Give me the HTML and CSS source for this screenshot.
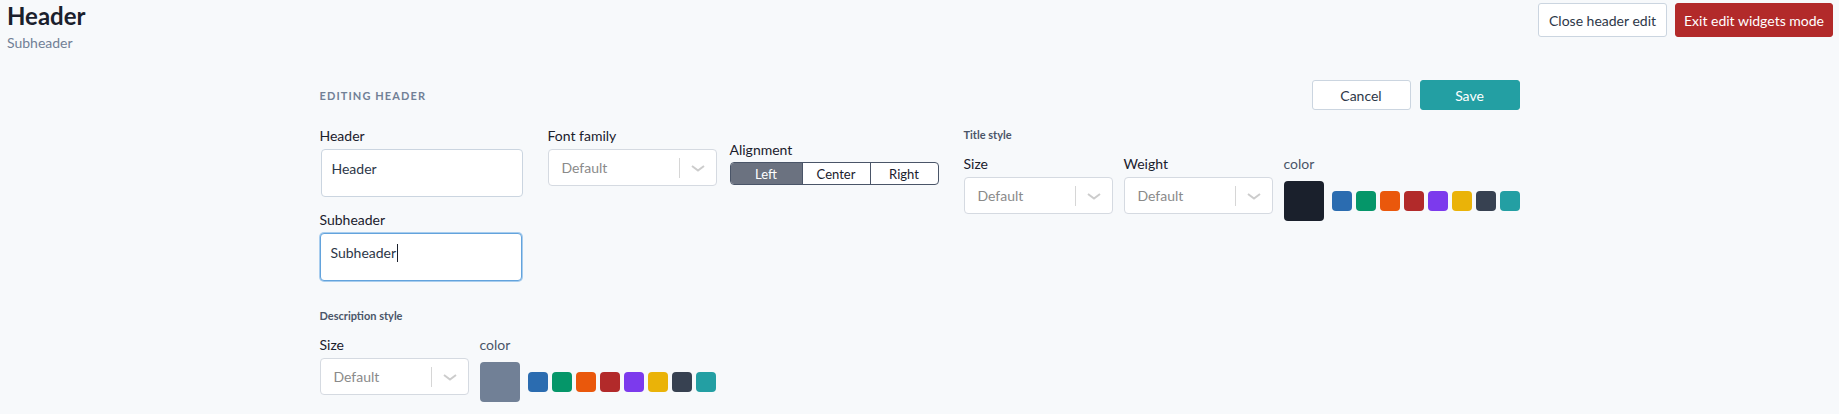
FILE: index.html
```html
<!DOCTYPE html>
<html lang="en">
<head>
<meta charset="utf-8">
<title>Header editor</title>
<link rel="stylesheet" href="styles.css">
</head>
<body>
<div class="topbar">
  <div class="titles">
    <h1 class="page-title">Header</h1>
    <p class="page-sub">Subheader</p>
  </div>
  <div class="top-actions">
    <button class="btn btn-outline btn-lg">Close header edit</button>
    <button class="btn btn-danger btn-lg">Exit edit widgets mode</button>
  </div>
</div>

<div class="editor">
  <div class="editor-head">
    <span class="editor-title">Editing header</span>
    <div class="editor-actions">
      <button class="btn btn-outline btn-md btn-cancel">Cancel</button>
      <button class="btn btn-teal btn-md btn-save">Save</button>
    </div>
  </div>

  <div class="editor-row">
    <div class="col-text">
      <div class="field">
        <label class="label">Header</label>
        <div class="text-input">Header</div>
      </div>
      <div class="field field-sub">
        <label class="label">Subheader</label>
        <div class="text-input focused">Subheader<span class="caret"></span></div>
      </div>
    </div>

    <div class="col-font">
      <label class="label">Font family</label>
      <div class="select select-wide">
        <span class="placeholder">Default</span>
        <span class="sep"></span>
        <svg class="chev" viewBox="0 0 20 20" width="20" height="20"><path d="M4 8 10 12.5 16 8" fill="none" stroke="#cccccc" stroke-width="2"/></svg>
      </div>
    </div>

    <div class="col-align">
      <label class="label">Alignment</label>
      <div class="segmented">
        <span class="seg seg-active">Left</span>
        <span class="seg">Center</span>
        <span class="seg">Right</span>
      </div>
    </div>

    <div class="col-style">
      <div class="section-label">Title style</div>
      <div class="style-row">
        <div class="field-inline">
          <label class="label">Size</label>
          <div class="select">
            <span class="placeholder">Default</span>
            <span class="sep"></span>
            <svg class="chev" viewBox="0 0 20 20" width="20" height="20"><path d="M4 8 10 12.5 16 8" fill="none" stroke="#cccccc" stroke-width="2"/></svg>
          </div>
        </div>
        <div class="field-inline">
          <label class="label">Weight</label>
          <div class="select">
            <span class="placeholder">Default</span>
            <span class="sep"></span>
            <svg class="chev" viewBox="0 0 20 20" width="20" height="20"><path d="M4 8 10 12.5 16 8" fill="none" stroke="#cccccc" stroke-width="2"/></svg>
          </div>
        </div>
        <div class="field-inline">
          <label class="label label-color">color</label>
          <div class="swatches">
            <span class="swatch-big sw-dark"></span>
            <span class="swatch c-blue"></span>
            <span class="swatch c-green"></span>
            <span class="swatch c-orange"></span>
            <span class="swatch c-red"></span>
            <span class="swatch c-purple"></span>
            <span class="swatch c-yellow"></span>
            <span class="swatch c-slate"></span>
            <span class="swatch c-teal"></span>
          </div>
        </div>
      </div>
    </div>
  </div>

  <div class="desc-style">
    <div class="section-label">Description style</div>
    <div class="style-row">
      <div class="field-inline">
        <label class="label">Size</label>
        <div class="select">
          <span class="placeholder">Default</span>
          <span class="sep"></span>
          <svg class="chev" viewBox="0 0 20 20" width="20" height="20"><path d="M4 8 10 12.5 16 8" fill="none" stroke="#cccccc" stroke-width="2"/></svg>
        </div>
      </div>
      <div class="field-inline">
        <label class="label label-color">color</label>
        <div class="swatches">
          <span class="swatch-big sw-gray"></span>
          <span class="swatch c-blue"></span>
          <span class="swatch c-green"></span>
          <span class="swatch c-orange"></span>
          <span class="swatch c-red"></span>
          <span class="swatch c-purple"></span>
          <span class="swatch c-yellow"></span>
          <span class="swatch c-slate"></span>
          <span class="swatch c-teal"></span>
        </div>
      </div>
    </div>
  </div>
</div>
</body>
</html>
```
FILE: styles.css
```css
* { box-sizing: border-box; }

html, body {
  margin: 0;
  padding: 0;
  background: #f7f9fb;
  font-family: Lato, "Open Sans", "Liberation Sans", sans-serif;
  color: #1a202c;
}

.topbar {
  display: flex;
  justify-content: space-between;
  align-items: flex-start;
  padding: 1px 6px 0 7px;
}

.page-title {
  margin: 0;
  font-size: 24px;
  line-height: 29px;
  font-weight: 700;
  color: #1a202c;
}

.page-sub {
  margin: 4px 0 0;
  font-size: 14px;
  line-height: 17px;
  color: #718096;
}

.top-actions {
  display: flex;
  gap: 8px;
  margin-top: 2px;
}

.btn {
  font-family: inherit;
  font-size: 14px;
  border-radius: 3px;
  cursor: pointer;
  padding: 0;
}

.btn-lg { height: 34px; }
.btn-md { height: 30px; }

.btn-outline {
  background: #ffffff;
  border: 1px solid #cbd5e0;
  color: #2d3748;
}

.top-actions .btn-outline { width: 129px; }

.btn-danger {
  background: #b22a2a;
  border: 1px solid #b22a2a;
  color: #ffffff;
  width: 158px;
}

.btn-teal {
  background: #239fa3;
  border: 1px solid #239fa3;
  color: #ffffff;
}

.btn-cancel { width: 99px; }
.btn-save { width: 100px; }

.editor {
  width: 1200px;
  margin: 29px auto 0;
}

.editor-head {
  display: flex;
  justify-content: space-between;
  align-items: center;
}

.editor-title {
  font-size: 11px;
  font-weight: 700;
  text-transform: uppercase;
  letter-spacing: 0.1em;
  color: #718096;
}

.editor-actions {
  display: flex;
  gap: 9px;
}

.editor-row {
  display: flex;
  align-items: flex-start;
  margin-top: 17px;
}

.label {
  display: block;
  font-size: 14px;
  line-height: 17px;
  color: #1a202c;
  margin-bottom: 5px;
}

.label-color { color: #4a5568; margin-bottom: 9px; }

.col-text { width: 203px; }

.field-sub { margin-top: 14px; }

.text-input {
  width: 202px;
  height: 48px;
  margin-left: 1px;
  background: #ffffff;
  border: 1px solid #cbd5e0;
  border-radius: 4px;
  padding: 10px 10px 0;
  font-size: 14px;
  line-height: 17px;
  color: #2d3748;
  display: flex;
  align-items: flex-start;
}

.text-input.focused {
  margin-left: 0;
  border-color: #63a3dc;
  box-shadow: 0 0 0 1px #a8cdee;
}

.caret {
  display: inline-block;
  width: 1px;
  height: 18px;
  background: #1a202c;
  margin-left: 1px;
}

.col-font { margin-left: 25px; width: 169px; }

.select {
  width: 149px;
  height: 37px;
  background: #ffffff;
  border: 1px solid #d5dae1;
  border-radius: 4px;
  display: flex;
  align-items: center;
  padding-left: 13px;
}

.select-wide { width: 169px; }

.placeholder {
  flex: 1;
  font-size: 14px;
  color: #8a8a8a;
}

.sep {
  width: 1px;
  height: 20px;
  background: #d6d6d6;
}

.chev { margin: 0 8px 0 8px; }

.col-align { margin-left: 13px; margin-top: 14px; }

.col-align .label { margin-bottom: 4px; }

.segmented {
  display: flex;
  width: 209px;
  height: 23px;
  border: 1px solid #4a5568;
  border-radius: 4px;
  overflow: hidden;
  background: #ffffff;
}

.seg {
  display: flex;
  align-items: center;
  justify-content: center;
  font-size: 13px;
  color: #1a202c;
  border-left: 1px solid #4a5568;
}

.seg:nth-child(1) { width: 71px; border-left: 0; }
.seg:nth-child(2) { width: 68px; }
.seg:nth-child(3) { flex: 1; }

.seg-active {
  background: #6b7280;
  color: #ffffff;
}

.col-style { margin-left: 25px; padding-top: 1px; }

.section-label {
  font-size: 11px;
  line-height: 13px;
  font-weight: 700;
  color: #4a5568;
}

.style-row {
  display: flex;
  gap: 11px;
  margin-top: 14px;
}

.swatches {
  display: flex;
  align-items: center;
  gap: 4px;
}

.swatch-big {
  width: 40px;
  height: 40px;
  border-radius: 4px;
  margin-right: 4px;
}

.sw-dark { background: #1a202c; }
.sw-gray { background: #718096; }

.swatch {
  width: 20px;
  height: 20px;
  border-radius: 4px;
}

.c-blue { background: #2b6cb0; }
.c-green { background: #059669; }
.c-orange { background: #ea580c; }
.c-red { background: #b22a2a; }
.c-purple { background: #7c3aed; }
.c-yellow { background: #eab308; }
.c-slate { background: #374151; }
.c-teal { background: #239fa3; }

.desc-style { margin-top: 28px; }
```
